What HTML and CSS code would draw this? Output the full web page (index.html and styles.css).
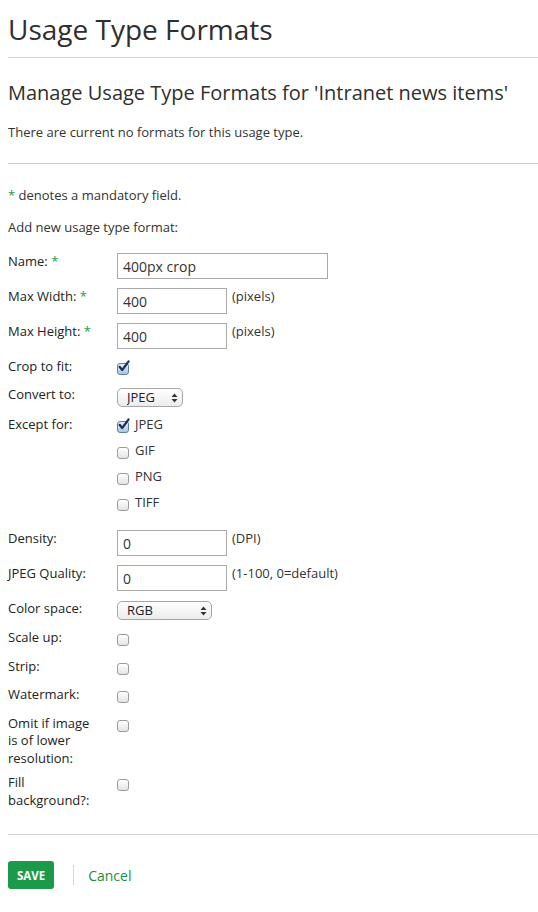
FILE: index.html
```html
<!DOCTYPE html>
<html>
<head>
  <meta charset="UTF-8">
  <title>Usage Type Formats</title>
  <link rel="stylesheet" href="styles.css">
</head>
<body>
  <div class="page">
    <h1 class="page-title">Usage Type Formats</h1>

    <div class="section">
      <h2>Manage Usage Type Formats for 'Intranet news items'</h2>
      <p class="empty">There are current no formats for this usage type.</p>
    </div>

    <form class="format-form">
      <p class="note"><span class="req">*</span> denotes a mandatory field.</p>
      <p class="intro">Add new usage type format:</p>

      <div class="field">
        <label class="field-label">Name: <span class="req">*</span></label>
        <div class="field-control"><input class="text wide" type="text" value="400px crop"></div>
      </div>
      <div class="field">
        <label class="field-label">Max Width: <span class="req">*</span></label>
        <div class="field-control"><input class="text" type="text" value="400"><span class="hint">(pixels)</span></div>
      </div>
      <div class="field">
        <label class="field-label">Max Height: <span class="req">*</span></label>
        <div class="field-control"><input class="text" type="text" value="400"><span class="hint">(pixels)</span></div>
      </div>
      <div class="field">
        <label class="field-label">Crop to fit:</label>
        <div class="field-control">
          <span class="check"><input type="checkbox" checked><svg class="tick" width="14" height="14" viewBox="0 0 14 14"><path d="M2.6 6.8 L5.2 10 L11.6 1.4" /></svg></span>
        </div>
      </div>
      <div class="field">
        <label class="field-label">Convert to:</label>
        <div class="field-control">
          <span class="select narrow"><select><option>JPEG</option><option>GIF</option><option>PNG</option><option>TIFF</option></select><svg class="arrows" width="7" height="10" viewBox="0 0 7 10"><path d="M3.5 0.5 L6.5 4 L0.5 4 Z M0.5 6 L6.5 6 L3.5 9.5 Z" /></svg></span>
        </div>
      </div>
      <div class="field">
        <label class="field-label">Except for:</label>
        <div class="field-control options">
          <label class="option"><span class="check"><input type="checkbox" checked><svg class="tick" width="14" height="14" viewBox="0 0 14 14"><path d="M2.6 6.8 L5.2 10 L11.6 1.4" /></svg></span>JPEG</label>
          <label class="option"><span class="check"><input type="checkbox"></span>GIF</label>
          <label class="option"><span class="check"><input type="checkbox"></span>PNG</label>
          <label class="option"><span class="check"><input type="checkbox"></span>TIFF</label>
        </div>
      </div>
      <div class="field">
        <label class="field-label">Density:</label>
        <div class="field-control"><input class="text" type="text" value="0"><span class="hint">(DPI)</span></div>
      </div>
      <div class="field">
        <label class="field-label">JPEG Quality:</label>
        <div class="field-control"><input class="text" type="text" value="0"><span class="hint">(1-100, 0=default)</span></div>
      </div>
      <div class="field">
        <label class="field-label">Color space:</label>
        <div class="field-control">
          <span class="select medium"><select><option>RGB</option><option>CMYK</option><option>Gray</option></select><svg class="arrows" width="7" height="10" viewBox="0 0 7 10"><path d="M3.5 0.5 L6.5 4 L0.5 4 Z M0.5 6 L6.5 6 L3.5 9.5 Z" /></svg></span>
        </div>
      </div>
      <div class="field">
        <label class="field-label">Scale up:</label>
        <div class="field-control"><span class="check"><input type="checkbox"></span></div>
      </div>
      <div class="field">
        <label class="field-label">Strip:</label>
        <div class="field-control"><span class="check"><input type="checkbox"></span></div>
      </div>
      <div class="field">
        <label class="field-label">Watermark:</label>
        <div class="field-control"><span class="check"><input type="checkbox"></span></div>
      </div>
      <div class="field">
        <label class="field-label">Omit if image is of lower resolution:</label>
        <div class="field-control"><span class="check"><input type="checkbox"></span></div>
      </div>
      <div class="field">
        <label class="field-label">Fill background?:</label>
        <div class="field-control"><span class="check"><input type="checkbox"></span></div>
      </div>

      <div class="actions">
        <button type="submit" class="btn-save">SAVE</button>
        <span class="divider"></span>
        <a href="#" class="cancel">Cancel</a>
      </div>
    </form>
  </div>
</body>
</html>
```

FILE: styles.css
```css
body {
  margin: 0;
  font-family: "Open Sans", "Noto Sans", Arial, sans-serif;
  font-size: 13px;
  color: #333;
  background: #fff;
}
.page {
  padding: 0 0 20px 8px;
}
.page-title {
  margin: 12px 0 0;
  padding-bottom: 11px;
  font-size: 28px;
  line-height: 34px;
  font-weight: 400;
  color: #2f2f2f;
  border-bottom: 1px solid #d0d0d0;
}
.section {
  padding-top: 22px;
  border-bottom: 1px solid #d0d0d0;
}
.section h2 {
  margin: 0;
  font-size: 20px;
  line-height: 26px;
  font-weight: 400;
  color: #2f2f2f;
}
.empty {
  margin: 16.5px 0 0;
  padding-bottom: 22.5px;
  line-height: 18px;
}
.format-form {
  padding-top: 22px;
}
.note, .intro {
  margin: 0;
  line-height: 18px;
}
.intro {
  margin-top: 13.5px;
  margin-bottom: 17px;
}
.req {
  color: #24994a;
}
.field {
  display: flex;
  align-items: flex-start;
  min-height: 21.5px;
  margin-bottom: 7px;
  padding-right: 8px;
}
.field-label {
  flex: none;
  width: 92px;
  margin-right: 17px;
  line-height: 17.5px;
  font-weight: 500;
  color: #222;
}
.field-control {
  display: flex;
  align-items: flex-start;
  line-height: 17.5px;
}
input.text {
  box-sizing: border-box;
  width: 110px;
  height: 26px;
  margin: 0 0 2px;
  padding: 1px 5px 0;
  border: 1px solid #a9a9a9;
  border-radius: 0;
  font-family: inherit;
  font-size: 14px;
  color: #333;
}
input.text.wide {
  width: 211px;
}
.hint {
  margin-left: 5px;
}
.check {
  position: relative;
  display: inline-block;
  flex: none;
  width: 12px;
  height: 12px;
  margin-top: 5px;
}
.check input {
  -webkit-appearance: none;
  appearance: none;
  display: block;
  box-sizing: border-box;
  width: 12px;
  height: 12px;
  margin: 0;
  border: 1px solid #9c9c9c;
  border-radius: 3px;
  background: linear-gradient(#ffffff, #e4e4e4);
}
.check input:checked {
  border-color: #5f7fa6;
  background: linear-gradient(#e3eefa, #a8c6e6);
}
.tick {
  position: absolute;
  top: -3px;
  left: 0;
  overflow: visible;
}
.tick path {
  fill: none;
  stroke: #1d2d55;
  stroke-width: 2.2;
  stroke-linecap: round;
  stroke-linejoin: round;
}
.select {
  position: relative;
  display: inline-block;
  margin: 1.5px 0 2px;
}
.select select {
  -webkit-appearance: none;
  appearance: none;
  box-sizing: border-box;
  height: 19px;
  padding: 0 0 0 9px;
  border: 1px solid #a6a6a6;
  border-radius: 5px;
  background: linear-gradient(#ffffff, #ececec);
  font-family: inherit;
  font-size: 13px;
  line-height: 17px;
  color: #222;
}
.select.narrow select {
  width: 66px;
}
.select.medium select {
  width: 95px;
}
.arrows {
  position: absolute;
  top: 5px;
  right: 5px;
  fill: #333;
}
.options {
  flex-direction: column;
  padding-bottom: 3px;
}
.option {
  display: flex;
  align-items: flex-start;
  gap: 6px;
  min-height: 21.5px;
  margin-bottom: 4.5px;
}
.actions {
  display: flex;
  align-items: center;
  margin-top: 25px;
  padding-top: 26px;
  border-top: 1px solid #d0d0d0;
}
.btn-save {
  height: 28px;
  padding: 0 9px;
  border: none;
  border-radius: 3px;
  background-color: #1b9a4b;
  color: #fff;
  font-family: inherit;
  font-size: 11.5px;
  font-weight: 700;
  cursor: pointer;
}
.divider {
  width: 1px;
  height: 20px;
  margin: 0 14px 0 19px;
  background: #d8d8d8;
}
.cancel {
  color: #1f8c3c;
  font-size: 14px;
  text-decoration: none;
}
```
